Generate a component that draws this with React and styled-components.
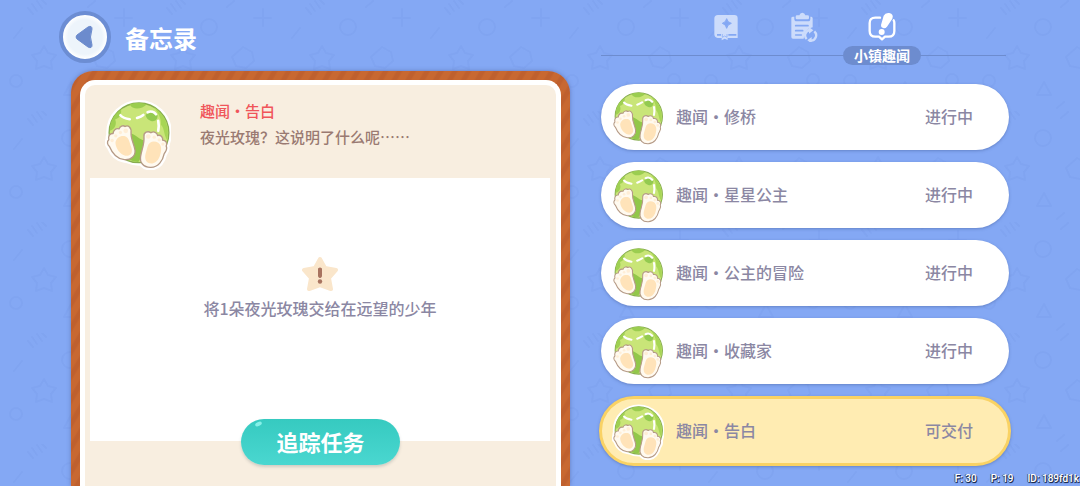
import React, { useState } from "react";
import styled, { createGlobalStyle } from "styled-components";

const color = {
  sky: "#84a8f4",
  skyDark: "#6d8ccf",
  cream: "#f8eee0",
  text: "#8b87a3",
  brown: "#9a7a72",
  red: "#f0555a",
};

const GlobalStyle = createGlobalStyle`
  * {
    box-sizing: border-box;
  }

  body {
    margin: 0;
    background: ${color.sky};
    font-family: "Noto Sans CJK SC", sans-serif;
    font-weight: 500;
    color: ${color.text};
  }

  button {
    font: inherit;
    color: inherit;
    border: 0;
    padding: 0;
    background: none;
    cursor: pointer;
  }
`;

const StyledPage = styled.div`
  position: relative;
  display: grid;
  grid-template-columns: minmax(0, 511fr) minmax(0, 408fr);
  column-gap: 31px;
  height: 100vh;
  padding: 0 71px 0 59px;
  overflow: hidden;
`;

const StyledBackdrop = styled.svg`
  position: absolute;
  inset: 0;
  width: 100%;
  height: 100%;
`;

const StyledColumn = styled.div`
  position: relative;
  display: flex;
  flex-direction: column;
  min-width: 0;
`;

const StyledHeader = styled.header`
  display: flex;
  align-items: center;
  gap: 14px;
  padding: 11px 0 8px;
`;

const StyledBack = styled.button`
  display: flex;
  align-items: center;
  justify-content: center;
  width: 52px;
  height: 52px;
  border: 4px solid #6c8dd3;
  border-radius: 50%;
  background: radial-gradient(circle, #edf4fb 55%, #ffffff 70%);
`;

const StyledTitle = styled.h1`
  margin: 0;
  padding-top: 2px;
  font-size: 24px;
  line-height: 32px;
  font-weight: 700;
  color: white;
`;

const StyledFrame = styled.main`
  flex: 1;
  display: flex;
  margin-left: 12px;
  padding: 9px 9px 0;
  border-radius: 22px 22px 0 0;
  background: repeating-linear-gradient(
    120deg,
    #c86831 0,
    #c86831 5px,
    #bf602e 7px,
    #bf602e 10px,
    #c86831 12px
  );
  box-shadow: 0 0 4px rgba(70, 80, 140, 0.5);
`;

const StyledPaper = styled.div`
  flex: 1;
  display: flex;
  flex-direction: column;
  border: 5px solid white;
  border-bottom: 0;
  border-radius: 15px 15px 0 0;
  background: ${color.cream};
`;

const StyledSummary = styled.div`
  display: flex;
  gap: 29px;
  height: 93px;
  padding: 12px 20px 0;
`;

const StyledSummaryText = styled.div`
  padding-top: 1px;
  font-size: 15px;
  line-height: 26px;
  color: ${color.brown};

  h2,
  p {
    margin: 0;
    font-size: 15px;
    font-weight: 500;
  }

  h2 {
    color: ${color.red};
  }
`;

const StyledTask = styled.div`
  flex: 1;
  display: flex;
  flex-direction: column;
  align-items: center;
  justify-content: center;
  margin: 0 6px 0 5px;
  padding-bottom: 40px;
  background: white;
  font-size: 16px;
  line-height: 32px;

  p {
    margin: 0;
  }
`;

const StyledActions = styled.div`
  display: flex;
  justify-content: center;
  height: 45px;
`;

const StyledTrack = styled.button`
  position: relative;
  width: 159px;
  height: 46px;
  margin-top: -22px;
  padding-bottom: 2px;
  border-radius: 23px;
  background: linear-gradient(#36cac0, #4ad7d0);
  box-shadow: 0 2px 3px rgba(120, 130, 130, 0.3);
  font-size: 22px;
  line-height: 44px;
  font-weight: 700;
  color: white;

  &::before {
    content: "";
    position: absolute;
    top: 3px;
    left: 14px;
    width: 7px;
    height: 4px;
    border-radius: 50%;
    background: #86f0e8;
    transform: rotate(-25deg);
  }
`;

const StyledTabs = styled.nav`
  display: flex;
  justify-content: center;
  height: 84px;
  padding: 12px 2px 0 0;
  background: linear-gradient(${color.skyDark}, ${color.skyDark}) no-repeat 0 55px / calc(100% - 3px) 1px;
`;

const StyledTab = styled.button`
  display: flex;
  flex-direction: column;
  align-items: center;
  gap: 4px;
  width: 78px;
  height: 53px;
  color: ${({ $active }) => ($active ? "white" : "#cddcfb")};
`;

const StyledTabLabel = styled.span`
  width: 100%;
  border-radius: 10px;
  background: ${color.skyDark};
  font-size: 14px;
  line-height: 19px;
  font-weight: 700;
`;

const StyledList = styled.ul`
  display: flex;
  flex-direction: column;
  gap: 12px;
  margin: 0;
  padding: 0;
  list-style: none;
`;

const StyledItem = styled.li`
  display: flex;
  margin: 0 ${({ $active }) => ($active ? "-2px" : "0")};
`;

const StyledRow = styled.button`
  flex: 1;
  display: flex;
  align-items: center;
  gap: 12px;
  height: ${({ $active }) => ($active ? "70px" : "66px")};
  padding: 0 ${({ $active }) => ($active ? "35px 0 10px" : "36px 0 11px")};
  border: ${({ $active }) => ($active ? "3px solid #f9d264" : "0")};
  border-radius: 35px;
  background: ${({ $active }) => ($active ? "#ffecb2" : "white")};
  box-shadow: 0 1px 3px rgba(70, 95, 160, 0.5);
  font-size: 16px;
  line-height: 24px;

  span {
    padding-bottom: 3px;
  }
`;

const StyledStatus = styled.span`
  margin-left: auto;
`;

const StyledDebug = styled.footer`
  position: absolute;
  right: 0;
  bottom: 0;
  display: flex;
  gap: 14px;
  padding-right: 1px;
  font-family: Roboto, sans-serif;
  font-size: 10px;
  line-height: 15px;
  color: white;
  text-shadow: 1px 1px 0 #1d2c4d, -1px 0 0 #4a5f93, 0 1px 1px #1d2c4d;
`;

const Backdrop = () => (
  <StyledBackdrop aria-hidden="true">
    <defs>
      <pattern id="doodles" width="139" height="111" patternUnits="userSpaceOnUse">
        <g fill="none" stroke="#7b9fec" strokeWidth="2" strokeLinejoin="round" strokeLinecap="round" opacity="0.45">
          <path d="M44 46l4 7 8 2-5 6 1 8-8-3-8 3 1-8-5-6 8-2z" />
          <circle cx="16" cy="81" r="6" />
          <circle cx="70" cy="27" r="8" />
          <path d="M104 47l9 5 2 9-8 7-10-2-4-9z" />
          <path d="M124 9v17M115 18h17" />
          <path d="M14 38l8-10M88 7l7-6M84 108l7-6" />
          <path d="M28 8l5 6M32 4l5 7M37 1l5 7M42 0l4 4" />
          <path d="M71 82l7 13H64z" />
          <circle cx="118" cy="80" r="6" />
        </g>
      </pattern>
    </defs>
    <rect width="100%" height="100%" fill="url(#doodles)" />
  </StyledBackdrop>
);

const leftFoot =
  "M41 149C34 155 37 164 43 169C49 184 62 206 88 209C108 211 122 197 120 180C117 161 107 147 108 128C110 112 99 103 90 109C84 104 74 108 72 116C62 113 54 121 54 130C45 129 38 138 41 149Z";
const rightFoot =
  "M147 140C145 126 159 121 168 128C176 122 187 127 188 136C198 133 205 142 203 150C213 150 218 159 214 168C219 178 212 184 208 191C204 212 190 232 168 232C146 233 133 218 137 198C140 178 149 162 147 140Z";

const GlobeBadge = ({ width, height }) => (
  <svg width={width} height={height} viewBox="30 20 198 220" aria-hidden="true">
    <g fill="white" stroke="white" strokeWidth="18" strokeLinejoin="round">
      <circle cx="132" cy="128" r="90" />
      <path d={leftFoot} />
      <path d={rightFoot} />
    </g>
    <circle cx="132" cy="128" r="90" fill="#c9e578" stroke="#87ad4e" strokeWidth="4" />
    <path d="M104 42C112 60 140 58 156 42C136 36 120 37 104 42Z" fill="#9bcd50" />
    <path d="M152 76C158 62 180 62 188 76C188 90 178 96 168 92C160 90 154 84 152 76Z" fill="#93ca50" />
    <path d="M44 122C60 118 66 100 60 88C74 84 80 72 78 58C58 70 44 94 44 122Z" fill="#9fd052" />
    <path d="M176 50C210 70 226 112 217 150C206 134 210 116 198 104C200 86 190 66 176 50Z" fill="#a7d655" />
    <path d="M108 130C126 136 132 148 146 150L142 196L130 216C116 214 104 212 100 204L120 190Z" fill="#92c74a" />
    <path
      d="M76 75C82 82 90 85 104 87M126 83C132 81 140 78 145 74M158 66C168 61 178 66 183 72M190 92C192 102 192 112 190 122"
      fill="none"
      stroke="white"
      strokeWidth="8"
      strokeLinecap="round"
    />
    <g fill="#fffaf0" stroke="#b59a86" strokeWidth="4" strokeLinejoin="round">
      <path d={leftFoot} />
      <path d={rightFoot} />
    </g>
    <g fill="#ffe3b9">
      <path d="M61 158C63 143 76 135 90 138C103 142 103 158 109 172C115 189 105 199 91 197C75 193 62 176 61 158Z" />
      <path d="M158 169C162 154 178 150 190 158C202 167 200 184 194 200C188 215 177 222 164 220C150 216 149 201 152 190Z" />
    </g>
    <g fill="#ffeed6">
      <circle cx="92" cy="122" r="7" />
      <circle cx="76" cy="127" r="5" />
      <circle cx="62" cy="137" r="5" />
      <circle cx="51" cy="151" r="5" />
      <circle cx="160" cy="139" r="7" />
      <circle cx="178" cy="141" r="5" />
      <circle cx="193" cy="149" r="5" />
      <circle cx="204" cy="162" r="5" />
    </g>
  </svg>
);

const BackArrow = () => (
  <svg width="20" height="26" viewBox="0 0 20 26" aria-hidden="true">
    <path d="M2 11L13 3Q17 1 17 5Q14 13 17 21Q17 25 13 23L2 15Q0 13 2 11Z" fill="#6c8bcd" stroke="#6c8bcd" strokeLinejoin="round" />
  </svg>
);

const BookIcon = () => (
  <svg width="28" height="30" viewBox="0 0 84 90" aria-hidden="true">
    <path d="M18 9H67Q77 9 77 19V78H47V84L38 80L29 85V78H17Q7 76 7 67V20Q7 9 18 9Z" fill="currentColor" />
    <path d="M44 20Q46 31 58 34Q46 37 44 49Q42 37 31 34Q42 31 44 20Z" fill={color.sky} stroke={color.sky} strokeWidth="3" />
    <path d="M15 66H27V71H15ZM49 66H73V71H49Z" fill={color.sky} />
    <path d="M31 66V76L38 72L45 76V66" fill="none" stroke={color.sky} strokeWidth="2" />
  </svg>
);

const ClipboardIcon = () => (
  <svg width="28" height="30" viewBox="0 0 84 90" aria-hidden="true">
    <path d="M9 14H13V20Q13 28 20 28H54Q61 28 61 20V14H64Q68 14 68 19V46Q43 50 41 80H9Q4 80 4 75V18Q4 14 9 14Z" fill="currentColor" />
    <path d="M21 10H28Q30 2 37 2Q44 2 46 10H53Q57 10 57 14V18Q57 22 53 22H21Q17 22 17 18V14Q17 10 21 10Z" fill="currentColor" />
    <path d="M17 41H54M17 56H38M17 69H34" stroke={color.sky} strokeWidth="5" strokeLinecap="round" />
    <g fill="none" stroke="currentColor" strokeWidth="7">
      <path d="M50 81A16 16 0 0 1 59 54M73 58A16 16 0 0 1 63 86" />
    </g>
    <path d="M57 45L70 55L57 65ZM65 95L52 85L65 75Z" fill="currentColor" />
  </svg>
);

const NewsIcon = () => (
  <svg width="28" height="30" viewBox="0 0 84 90" aria-hidden="true">
    <path
      d="M36 17H22Q5 17 5 33V57Q5 74 22 74H33L42 82L51 74H62Q79 74 79 57V33Q79 28 77 25"
      fill="none"
      stroke="currentColor"
      strokeWidth="7"
      strokeLinejoin="round"
      strokeLinecap="round"
    />
    <path d="M47 11Q52 1 64 3Q78 6 73 20L57 44Q52 50 45 48Q38 46 39 39Z" fill="currentColor" stroke={color.sky} strokeWidth="4" paintOrder="stroke" />
    <circle cx="41" cy="60" r="9" fill="currentColor" />
  </svg>
);

const StarIcon = () => (
  <svg width="36" height="36" viewBox="0 0 36 36" aria-hidden="true">
    <path d="M18 3L23 12L34 14L27 22L29 33L18 29L7 33L9 22L2 14L13 12Z" fill="#fae6cb" stroke="#fae6cb" strokeWidth="4" strokeLinejoin="round" />
    <path d="M17 13Q18 12 19 13V20Q18 22 17 20Z" fill="#a8735f" stroke="#a8735f" strokeWidth="2" strokeLinejoin="round" />
    <circle cx="18" cy="25.5" r="2.2" fill="#a8735f" />
  </svg>
);

const tabs = [
  { label: "图鉴", Icon: BookIcon },
  { label: "任务", Icon: ClipboardIcon },
  { label: "小镇趣闻", Icon: NewsIcon },
];

const stories = [
  { name: "修桥", status: "进行中" },
  { name: "星星公主", status: "进行中" },
  { name: "公主的冒险", status: "进行中" },
  { name: "收藏家", status: "进行中" },
  { name: "告白", status: "可交付" },
];

const Tabs = () => {
  const [active, setActive] = useState(2);

  return (
    <StyledTabs>
      {tabs.map(({ label, Icon }, i) => (
        <StyledTab key={label} $active={i === active} aria-label={label} onClick={() => setActive(i)}>
          <Icon />
          {i === active && <StyledTabLabel>{label}</StyledTabLabel>}
        </StyledTab>
      ))}
    </StyledTabs>
  );
};

const StoryList = ({ selected, onSelect }) => (
  <StyledList>
    {stories.map(({ name, status }, i) => (
      <StyledItem key={name} $active={i === selected}>
        <StyledRow $active={i === selected} onClick={() => onSelect(i)}>
          <GlobeBadge width={52} height={58} />
          <span>趣闻·{name}</span>
          <StyledStatus>{status}</StyledStatus>
        </StyledRow>
      </StyledItem>
    ))}
  </StyledList>
);

const TaskPanel = ({ name }) => (
  <StyledFrame>
    <StyledPaper>
      <StyledSummary>
        <GlobeBadge width={66} height={73} />
        <StyledSummaryText>
          <h2>趣闻·{name}</h2>
          <p>夜光玫瑰？这说明了什么呢……</p>
        </StyledSummaryText>
      </StyledSummary>
      <StyledTask>
        <StarIcon />
        <p>将1朵夜光玫瑰交给在远望的少年</p>
      </StyledTask>
      <StyledActions>
        <StyledTrack>追踪任务</StyledTrack>
      </StyledActions>
    </StyledPaper>
  </StyledFrame>
);

const App = () => {
  const [selected, setSelected] = useState(4);

  return (
    <StyledPage>
      <GlobalStyle />
      <Backdrop />
      <StyledColumn>
        <StyledHeader>
          <StyledBack aria-label="返回">
            <BackArrow />
          </StyledBack>
          <StyledTitle>备忘录</StyledTitle>
        </StyledHeader>
        <TaskPanel name={stories[selected].name} />
      </StyledColumn>
      <StyledColumn>
        <Tabs />
        <StoryList selected={selected} onSelect={setSelected} />
      </StyledColumn>
      <StyledDebug>
        <span>F: 30</span>
        <span>P: 19</span>
        <span>ID: 189fd1k</span>
      </StyledDebug>
    </StyledPage>
  );
};

export default App;
